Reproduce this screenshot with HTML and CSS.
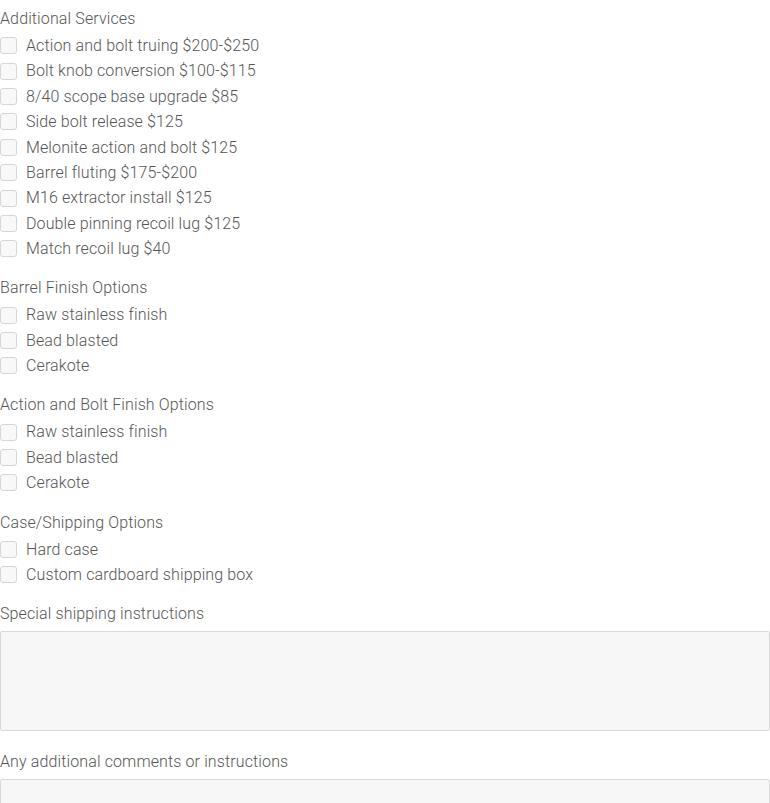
FILE: index.html
```html
<!DOCTYPE html>
<html>
<head>
<meta charset="utf-8">
<link rel="stylesheet" href="styles.css">
</head>
<body>
<form class="form">
  <fieldset class="group">
    <div class="heading">Additional Services</div>
    <label class="opt"><input type="checkbox" class="cb"><span>Action and bolt truing $200-$250</span></label>
    <label class="opt"><input type="checkbox" class="cb"><span>Bolt knob conversion $100-$115</span></label>
    <label class="opt"><input type="checkbox" class="cb"><span>8/40 scope base upgrade $85</span></label>
    <label class="opt"><input type="checkbox" class="cb"><span>Side bolt release $125</span></label>
    <label class="opt"><input type="checkbox" class="cb"><span>Melonite action and bolt $125</span></label>
    <label class="opt"><input type="checkbox" class="cb"><span>Barrel fluting $175-$200</span></label>
    <label class="opt"><input type="checkbox" class="cb"><span>M16 extractor install $125</span></label>
    <label class="opt"><input type="checkbox" class="cb"><span>Double pinning recoil lug $125</span></label>
    <label class="opt"><input type="checkbox" class="cb"><span>Match recoil lug $40</span></label>
  </fieldset>
  <fieldset class="group">
    <div class="heading">Barrel Finish Options</div>
    <label class="opt"><input type="checkbox" class="cb"><span>Raw stainless finish</span></label>
    <label class="opt"><input type="checkbox" class="cb"><span>Bead blasted</span></label>
    <label class="opt"><input type="checkbox" class="cb"><span>Cerakote</span></label>
  </fieldset>
  <fieldset class="group">
    <div class="heading">Action and Bolt Finish Options</div>
    <label class="opt"><input type="checkbox" class="cb"><span>Raw stainless finish</span></label>
    <label class="opt"><input type="checkbox" class="cb"><span>Bead blasted</span></label>
    <label class="opt"><input type="checkbox" class="cb"><span>Cerakote</span></label>
  </fieldset>
  <fieldset class="group">
    <div class="heading">Case/Shipping Options</div>
    <label class="opt"><input type="checkbox" class="cb"><span>Hard case</span></label>
    <label class="opt"><input type="checkbox" class="cb"><span>Custom cardboard shipping box</span></label>
  </fieldset>
  <div class="field">
    <label class="heading tight">Special shipping instructions</label>
    <textarea class="ta"></textarea>
  </div>
  <div class="field">
    <label class="heading tight">Any additional comments or instructions</label>
    <textarea class="ta"></textarea>
  </div>
</form>
</body>
</html>
```

FILE: styles.css
```css
html, body {
  margin: 0;
  padding: 0;
  background: #ffffff;
}
body {
  font-family: Roboto, "Liberation Sans", sans-serif;
  font-weight: 300;
  font-size: 16px;
  letter-spacing: 0.12px;
  color: #555555;
}
.form {
  padding-top: 6px;
  display: flex;
  flex-direction: column;
}
.group {
  border: 0;
  margin: 0 0 13.9px 0;
  padding: 0;
  display: flex;
  flex-direction: column;
}
.heading {
  display: block;
  line-height: 25.4px;
  margin-bottom: 1.6px;
}
.heading.tight {
  margin-bottom: 4.6px;
}
.opt {
  display: flex;
  align-items: center;
  gap: 9px;
  height: 25.4px;
  line-height: 25.4px;
}
.cb {
  appearance: none;
  -webkit-appearance: none;
  margin: 0;
  width: 17px;
  height: 17px;
  border: 1px solid #d6d6d6;
  border-radius: 3px;
  background: #f8f8f8;
  flex: none;
}
.field {
  display: flex;
  flex-direction: column;
  margin-bottom: 17.3px;
}
.ta {
  display: block;
  box-sizing: border-box;
  width: 770px;
  height: 100px;
  margin: 0;
  border: 1px solid #d9d9d9;
  border-radius: 2px;
  background: #f7f7f7;
  resize: none;
  font: inherit;
}
```
